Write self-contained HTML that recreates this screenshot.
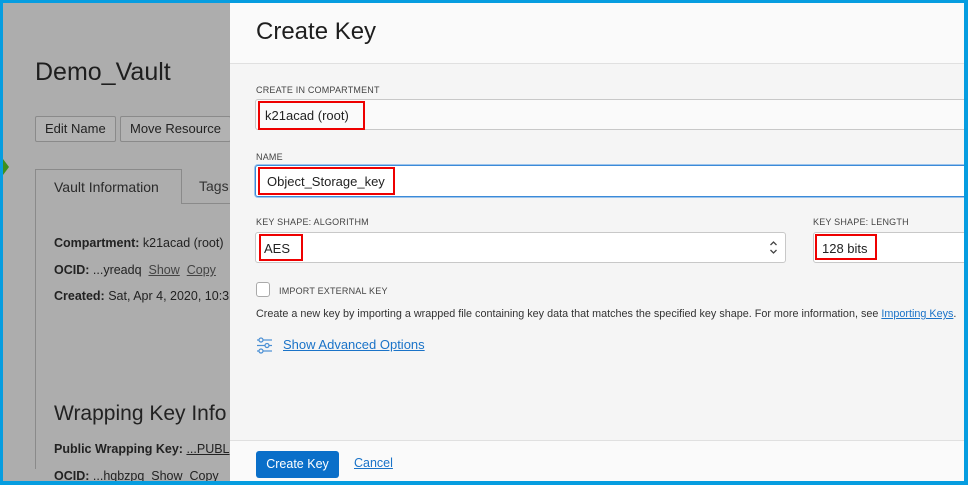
<!DOCTYPE html>
<html><head><style>
*{box-sizing:border-box;margin:0;padding:0}
body{width:968px;height:485px;overflow:hidden;position:relative;font-family:"Liberation Sans",Arial,sans-serif;background:#adadad;color:#222}
.a{position:absolute}
.btn{position:absolute;top:116px;height:26px;border:1px solid #8a8a8a;border-radius:2px;font-size:13px;line-height:24px;padding:0 9px;color:#222;background:#b2b2b2}
.lbl{position:absolute;font-size:9px;color:#444;letter-spacing:.2px}
.inp{position:absolute;background:#fafafa;border:1px solid #c8c8c8;border-radius:3px}
.red{position:absolute;border:2px solid #e00;font-size:13px;color:#222;line-height:26px;padding-left:5px;white-space:nowrap}
.f{font-size:12.5px}
</style></head><body>
<div class="a" style="left:35px;top:58px;font-size:25px;color:#1e1e1e">Demo_Vault</div>
<div class="btn" style="left:35px">Edit Name</div>
<div class="btn" style="left:120px">Move Resource</div>
<div class="a" style="left:0;top:155px;width:0;height:0;border-top:12px solid transparent;border-bottom:12px solid transparent;border-left:9px solid #3f8f1e"></div>
<div class="a" style="left:35px;top:169px;width:200px;height:300px;border-left:1px solid #8a8a8a;"></div>
<div class="a" style="left:35px;top:169px;width:147px;height:35px;border:1px solid #8a8a8a;border-bottom:none;background:#adadad;font-size:14px;padding:9px 0 0 18px;color:#2a2a2a">Vault Information</div>
<div class="a" style="left:182px;top:203px;width:50px;border-top:1px solid #8a8a8a"></div>
<div class="a" style="left:199px;top:178px;font-size:14px;color:#333">Tags</div>
<div class="a f" style="left:54px;top:236px"><b>Compartment:</b> k21acad (root)</div>
<div class="a f" style="left:54px;top:263px"><b>OCID:</b> ...yreadq &nbsp;<u style="color:#444">Show</u>&nbsp;&nbsp;<u style="color:#444">Copy</u></div>
<div class="a f" style="left:54px;top:289px"><b>Created:</b> Sat, Apr 4, 2020, 10:3</div>
<div class="a" style="left:54px;top:402px;font-size:21px;color:#222;white-space:nowrap">Wrapping Key Info</div>
<div class="a f" style="left:54px;top:442px;white-space:nowrap"><b>Public Wrapping Key:</b> <u>...PUBL</u></div>
<div class="a f" style="left:54px;top:469px;white-space:nowrap"><b>OCID:</b> ...hqbzpq &nbsp;Show&nbsp; Copy</div>

<div class="a" style="left:230px;top:0;width:738px;height:485px;background:#f5f5f5"></div>
<div class="a" style="left:230px;top:0;width:738px;height:64px;background:#fafafa;border-bottom:1px solid #e0e0e0"></div>
<div class="a" style="left:256px;top:18px;font-size:24px;color:#1e1e1e">Create Key</div>
<div class="lbl" style="left:256px;top:85px">CREATE IN COMPARTMENT</div>
<div class="inp" style="left:255px;top:99px;width:720px;height:31px"></div>
<div class="red" style="left:258px;top:101px;width:107px;height:29px">k21acad (root)</div>
<div class="lbl" style="left:256px;top:152px">NAME</div>
<div class="inp" style="left:255px;top:165px;width:720px;height:32px;background:#fff;border:1px solid #3b8ad8;box-shadow:0 0 0 1px #9cc4ec"></div>
<div class="red" style="left:258px;top:167px;width:137px;height:28px;padding-left:7px">Object_Storage_key</div>
<div class="lbl" style="left:256px;top:217px">KEY SHAPE: ALGORITHM</div>
<div class="inp" style="left:255px;top:232px;width:531px;height:31px;background:#fff"></div>
<div class="red" style="left:259px;top:234px;width:44px;height:27px;padding-left:3px">AES</div>
<svg class="a" style="left:769px;top:240px" width="9" height="15" viewBox="0 0 9 15" fill="none" stroke="#444" stroke-width="1.3"><path d="M1.5 5L4.5 2L7.5 5M1.5 10L4.5 13L7.5 10"/></svg>
<div class="lbl" style="left:813px;top:217px">KEY SHAPE: LENGTH</div>
<div class="inp" style="left:813px;top:232px;width:170px;height:31px;background:#fff"></div>
<div class="red" style="left:815px;top:234px;width:62px;height:26px">128 bits</div>
<div class="a" style="left:256px;top:282px;width:14px;height:15px;border:1px solid #aaa;border-radius:3px;background:#fff"></div>
<div class="lbl" style="left:279px;top:286px">IMPORT EXTERNAL KEY</div>
<div class="a" style="left:256px;top:308px;font-size:10.8px;color:#333;white-space:nowrap">Create a new key by importing a wrapped file containing key data that matches the specified key shape. For more information, see <u style="color:#1a73c8">Importing Keys</u>.</div>
<svg class="a" style="left:256px;top:337px" width="17" height="17" viewBox="0 0 17 17" fill="none" stroke="#4a8fd4" stroke-width="1.2"><line x1="1" y1="3" x2="16" y2="3"/><line x1="1" y1="8.5" x2="16" y2="8.5"/><line x1="1" y1="14" x2="16" y2="14"/><circle cx="5" cy="3" r="2" fill="#f5f5f5"/><circle cx="11" cy="8.5" r="2" fill="#f5f5f5"/><circle cx="5" cy="14" r="2" fill="#f5f5f5"/></svg>
<div class="a" style="left:283px;top:337px;font-size:13px;color:#1a73c8;text-decoration:underline">Show Advanced Options</div>
<div class="a" style="left:230px;top:440px;width:738px;height:45px;background:#fafafa;border-top:1px solid #e0e0e0"></div>
<div class="a" style="left:256px;top:451px;width:83px;height:27px;background:#0a6fc9;border-radius:3px;color:#fff;font-size:12.5px;line-height:27px;text-align:center">Create Key</div>
<div class="a" style="left:354px;top:456px;font-size:12.5px;color:#1a73c8;text-decoration:underline">Cancel</div>
<div class="a" style="left:0;top:0;width:968px;height:485px;border:3px solid #069de0;border-right-width:4px;border-bottom-width:4px"></div>
</body></html>
